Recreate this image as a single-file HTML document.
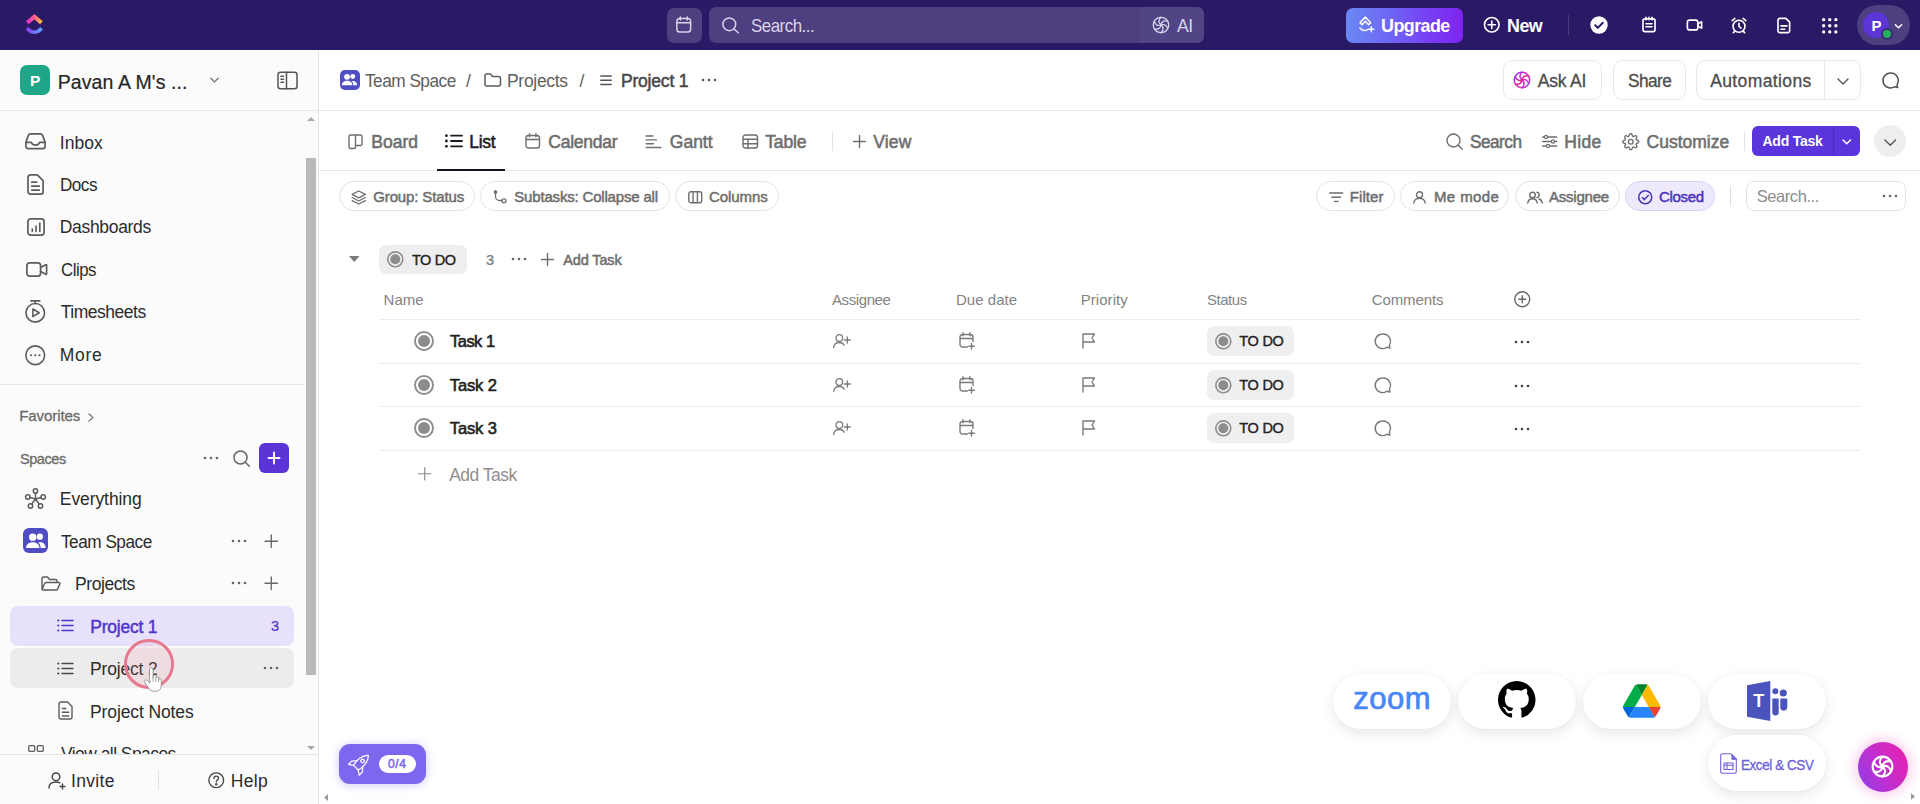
<!DOCTYPE html>
<html lang="en"><head><meta charset="utf-8"><title>Project 1 | Team Space - ClickUp</title>
<style>
html,body{margin:0;padding:0;}
body{width:1920px;height:804px;overflow:hidden;background:#fff;font-family:"Liberation Sans", sans-serif;position:relative;-webkit-font-smoothing:antialiased;}
#topbar{position:absolute;left:0;top:0;width:1920px;height:50px;background:#2a1a66;}
#sidebar{position:absolute;left:0;top:50px;width:318px;height:754px;background:#fbfbfb;border-right:1px solid #e4e4e4;overflow:hidden;}
#main{position:absolute;left:319px;top:50px;width:1601px;height:754px;background:#fff;overflow:hidden;}
#float{position:absolute;left:0;top:0;width:1920px;height:804px;pointer-events:none;}
svg{overflow:visible}
</style></head><body>
<header id="topbar">
<svg style="position:absolute;left:25px;top:13px" width="19" height="22" viewBox="0 0 19 22">
<defs><linearGradient id="lg1" x1="0" y1="0" x2="1" y2="0"><stop offset="0" stop-color="#e02fd0"/><stop offset="0.55" stop-color="#ff5f8a"/><stop offset="1" stop-color="#ffc233"/></linearGradient>
<linearGradient id="lg2" x1="0" y1="0" x2="1" y2="0"><stop offset="0" stop-color="#8f3ff5"/><stop offset="1" stop-color="#5aa0ff"/></linearGradient></defs>
<path d="M2.200 9.800L9.300 3.700l7.100 6.100" fill="none" stroke="url(#lg1)" stroke-width="4.100" stroke-linejoin="miter"/>
<path d="M2 15.300Q9.300 23.300 16.600 15.300" fill="none" stroke="url(#lg2)" stroke-width="3.600"/>
</svg>
<div style="position:absolute;left:667px;top:8px;width:35px;height:35px;background:#4d3f80;border-radius:7px;"></div>
<svg style="position:absolute;left:676.2px;top:16px;" width="15.5" height="17" viewBox="0 0 15.500 17" fill="none" stroke="#d9d4ea" stroke-width="1.5" stroke-linecap="round" stroke-linejoin="round"><rect x=".9" y="2.600" width="13.700" height="13.500" rx="2.800"/><path d="M.9 6.800h13.700M4.300 .9v3.200M11.200 .9v3.200"/></svg>
<div style="position:absolute;left:709px;top:7px;width:495px;height:36px;background:#4d3f80;border-radius:7px;"></div>
<div style="position:absolute;left:1140px;top:7px;width:64px;height:36px;background:#514586;border-radius:0 7px 7px 0;"></div>
<svg style="position:absolute;left:721.5px;top:17px;" width="17" height="16.5" viewBox="0 0 17 16.500" fill="none" stroke="#d9d4ea" stroke-width="1.5" stroke-linecap="round" stroke-linejoin="round"><circle cx="7.300" cy="7.300" r="6.400"/><path d="M12 12l4.200 3.800"/></svg>
<span style="position:absolute;left:750.91px;top:14.02px;line-height:24px;font-size:18.5px;font-weight:400;color:#d9d4ea;letter-spacing:-0.555px;white-space:nowrap;transform:scaleX(0.9145);transform-origin:0 50%;">Search...</span>
<svg style="position:absolute;left:1152px;top:16px;" width="18" height="18" viewBox="0 0 24 24" fill="none" stroke="#d9d4ea" stroke-width="1.7" stroke-linecap="round" stroke-linejoin="round"><circle cx="12" cy="12" r="10.3"/><path d="M12 12Q6.48 7.37 12.00 1.70M12 12Q13.25 4.90 20.92 6.85M12 12Q18.78 9.53 20.92 17.15M12 12Q17.52 16.63 12.00 22.30M12 12Q10.75 19.10 3.08 17.15M12 12Q5.22 14.47 3.08 6.85"/></svg>
<span style="position:absolute;left:1176.71px;top:14.02px;line-height:24px;font-size:18.5px;font-weight:400;color:#d9d4ea;letter-spacing:-0.555px;white-space:nowrap;transform:scaleX(0.9503);transform-origin:0 50%;">AI</span>
<div style="position:absolute;left:1346px;top:8px;width:117px;height:35px;background:linear-gradient(90deg,#6a88f2 0%,#6e66f5 38%,#783ef5 72%,#7e24f0 100%);border-radius:7px;"></div>
<svg style="position:absolute;left:1358px;top:15px;" width="16.5" height="17.5" viewBox="0 0 18 19" fill="none" stroke="#ffffff" stroke-width="1.6" stroke-linecap="round" stroke-linejoin="round"><path d="M2.200 8.300L8 2.200l5.800 6.100-2.200 2.200L8 6.800 4.400 10.500z"/><path d="M2 14.200c2.600 2.800 6 3.200 8.600 1.600M14.500 12.800v5.400M11.800 15.500h5.400"/></svg>
<span style="position:absolute;left:1380.70px;top:14.00px;line-height:24px;font-size:18px;font-weight:700;color:#ffffff;letter-spacing:-0.540px;white-space:nowrap;transform:scaleX(0.9933);transform-origin:0 50%;">Upgrade</span>
<svg style="position:absolute;left:1483px;top:16px;" width="17.5" height="17.5" viewBox="0 0 24 24" fill="none" stroke="#ffffff" stroke-width="2.2" stroke-linecap="round" stroke-linejoin="round"><circle cx="12" cy="12" r="10"/><path d="M12 7v10M7 12h10"/></svg>
<span style="position:absolute;left:1507.01px;top:14.00px;line-height:24px;font-size:18px;font-weight:700;color:#ffffff;letter-spacing:-0.540px;white-space:nowrap;transform:scaleX(0.9936);transform-origin:0 50%;">New</span>
<div style="position:absolute;left:1568px;top:15px;width:1px;height:20px;background:#4a3d7d;"></div>
<svg style="position:absolute;left:1590px;top:16px" width="18" height="18" viewBox="0 0 18 18"><circle cx="9" cy="9" r="8.7" fill="#fff"/><path d="M5.2 9.3l2.6 2.6 5-5.2" fill="none" stroke="#2a1a66" stroke-width="2" stroke-linecap="round" stroke-linejoin="round"/></svg>
<svg style="position:absolute;left:1640px;top:15px;" width="18" height="19" viewBox="0 0 24 24" fill="none" stroke="#ffffff" stroke-width="2.2" stroke-linecap="round" stroke-linejoin="round"><rect x="4" y="4.5" width="16" height="17" rx="2.5"/><path d="M8 2.5v3M12 2.5v3M16 2.5v3M8 11h8M8 15h8"/></svg>
<svg style="position:absolute;left:1685px;top:16px;" width="19" height="18" viewBox="0 0 24 24" fill="none" stroke="#ffffff" stroke-width="2.2" stroke-linecap="round" stroke-linejoin="round"><rect x="2.5" y="5.5" width="14" height="13" rx="3"/><path d="M16.5 10.5l5-2.8v8.6l-5-2.8z"/></svg>
<svg style="position:absolute;left:1730px;top:15.5px;" width="18" height="19" viewBox="0 0 24 24" fill="none" stroke="#ffffff" stroke-width="2.2" stroke-linecap="round" stroke-linejoin="round"><circle cx="12" cy="13" r="8"/><path d="M12 9v4l2.5 2.5M3 5.5l3.5-3M21 5.5l-3.5-3M6.5 19.5l-2 2M17.5 19.5l2 2"/></svg>
<svg style="position:absolute;left:1775px;top:15.5px;" width="18" height="19" viewBox="0 0 24 24" fill="none" stroke="#ffffff" stroke-width="2.2" stroke-linecap="round" stroke-linejoin="round"><path d="M6.5 2.5h8l5 5V19a2.5 2.5 0 0 1-2.5 2.5h-10.5A2.5 2.5 0 0 1 4 19V5a2.5 2.5 0 0 1 2.5-2.5z"/><path d="M8 12.500h8M8 17h5"/></svg>
<svg style="position:absolute;left:1820.5px;top:16.5px;" width="17.5" height="17.5" viewBox="0 0 20 20" fill="#ffffff" stroke="none" stroke-width="0" stroke-linecap="round" stroke-linejoin="round"><circle cx="3" cy="3" r="1.9"/><circle cx="3" cy="10" r="1.9"/><circle cx="3" cy="17" r="1.9"/><circle cx="10" cy="3" r="1.9"/><circle cx="10" cy="10" r="1.9"/><circle cx="10" cy="17" r="1.9"/><circle cx="17" cy="3" r="1.9"/><circle cx="17" cy="10" r="1.9"/><circle cx="17" cy="17" r="1.9"/></svg>
<div style="position:absolute;left:1857px;top:5px;width:53px;height:40px;background:#4d3f80;border-radius:20px;"></div>
<div style="position:absolute;left:1863px;top:12px;width:26px;height:26px;background:#5b35d5;border-radius:50%;"></div>
<span style="position:absolute;left:1871.50px;top:14.00px;line-height:24px;font-size:15px;font-weight:700;color:#ffffff;letter-spacing:0.000px;white-space:nowrap;">P</span>
<div style="position:absolute;left:1880.5px;top:28px;width:8px;height:8px;background:#27ae60;border-radius:50%;border:2px solid #3a2b73;"></div>
<svg style="position:absolute;left:1894px;top:22.5px;" width="9" height="7" viewBox="0 0 10 7" fill="none" stroke="#ffffff" stroke-width="1.6" stroke-linecap="round" stroke-linejoin="round"><path d="M1.5 1.5l3.5 3.5 3.5-3.5"/></svg>
</header>
<aside id="sidebar">
<div style="position:absolute;left:20px;top:15px;width:30px;height:30px;background:#1fa588;border-radius:7px;"></div>
<span style="position:absolute;left:30.00px;top:19.00px;line-height:24px;font-size:15.5px;font-weight:700;color:#fff;letter-spacing:0.000px;white-space:nowrap;">P</span>
<span style="position:absolute;left:57.72px;top:20.02px;line-height:24px;font-size:19.5px;font-weight:400;color:#262626;letter-spacing:0.099px;white-space:nowrap;-webkit-text-stroke:0.2px #262626;">Pavan A M&#x27;s ...</span>
<svg style="position:absolute;left:209.5px;top:26.5px;" width="9" height="6.5" viewBox="0 0 9 6" fill="none" stroke="#6a6a6a" stroke-width="1.1" stroke-linecap="round" stroke-linejoin="round"><path d="M.8 1l3.700 3.700L8.200 1"/></svg>
<svg style="position:absolute;left:277px;top:21px;" width="21" height="19" viewBox="0 0 21 18.5" fill="none" stroke="#555" stroke-width="1.5" stroke-linecap="round" stroke-linejoin="round"><rect x="1" y="1" width="19" height="16.5" rx="2.5"/><path d="M9.5 1v16.5M4 5h2.5M4 8h2.5M4 11h2.5"/></svg>
<div style="position:absolute;left:0px;top:60px;width:318px;height:1px;background:#e6e6e6;"></div>
<div style="position:absolute;left:304px;top:61px;width:14px;height:643px;background:#fbfbfb;"></div>
<div style="position:absolute;left:306px;top:108px;width:10px;height:517px;background:#b9b9b9;"></div>
<svg style="position:absolute;left:307px;top:67px" width="8" height="4" viewBox="0 0 8 4"><path d="M0 4l4-4 4 4z" fill="#a8a8a8"/></svg>
<svg style="position:absolute;left:307px;top:696px" width="8" height="4" viewBox="0 0 8 4"><path d="M0 0l4 4 4-4z" fill="#a8a8a8"/></svg>
<span style="position:absolute;left:59.81px;top:81.01px;line-height:24px;font-size:17.5px;font-weight:400;color:#2b2b2b;letter-spacing:0.035px;white-space:nowrap;">Inbox</span>
<span style="position:absolute;left:59.82px;top:123.00px;line-height:24px;font-size:17.5px;font-weight:400;color:#2b2b2b;letter-spacing:-0.525px;white-space:nowrap;transform:scaleX(0.9775);transform-origin:0 50%;">Docs</span>
<span style="position:absolute;left:59.81px;top:165.00px;line-height:24px;font-size:17.5px;font-weight:400;color:#2b2b2b;letter-spacing:-0.324px;white-space:nowrap;">Dashboards</span>
<span style="position:absolute;left:60.81px;top:208.01px;line-height:24px;font-size:17.5px;font-weight:400;color:#2b2b2b;letter-spacing:-0.525px;white-space:nowrap;transform:scaleX(0.9637);transform-origin:0 50%;">Clips</span>
<span style="position:absolute;left:60.81px;top:250.01px;line-height:24px;font-size:17.5px;font-weight:400;color:#2b2b2b;letter-spacing:-0.484px;white-space:nowrap;">Timesheets</span>
<span style="position:absolute;left:59.81px;top:293.01px;line-height:24px;font-size:17.5px;font-weight:400;color:#2b2b2b;letter-spacing:0.687px;white-space:nowrap;">More</span>
<svg style="position:absolute;left:25px;top:83px;" width="21" height="16.5" viewBox="0 0 21 16.5" fill="none" stroke="#5c5c5c" stroke-width="1.7" stroke-linecap="round" stroke-linejoin="round"><path d="M.9 9.300L3.300 2.600A2.600 2.600 0 0 1 5.800 .9h9.400a2.600 2.600 0 0 1 2.500 1.700l2.400 6.700v4a2.300 2.300 0 0 1-2.300 2.300H3.200A2.300 2.300 0 0 1 .9 13.300z"/><path d="M.9 9.300h5.400c.6 1.900 2.100 2.900 4.200 2.900s3.600-1 4.200-2.900h5.400"/></svg>
<svg style="position:absolute;left:27px;top:124px;" width="17" height="21" viewBox="0 0 17 21" fill="none" stroke="#5c5c5c" stroke-width="1.7" stroke-linecap="round" stroke-linejoin="round"><path d="M3.400 .9h6.900l5.800 5.800v11a2.400 2.400 0 0 1-2.400 2.400H3.400A2.400 2.400 0 0 1 1 17.700V3.300A2.400 2.400 0 0 1 3.400 .9z"/><path d="M4.800 8.200h4.800M4.800 12.200h7.500M4.800 16.200h7.500"/></svg>
<svg style="position:absolute;left:26.5px;top:167.5px;" width="18" height="18" viewBox="0 0 18 18" fill="none" stroke="#5c5c5c" stroke-width="1.7" stroke-linecap="round" stroke-linejoin="round"><rect x=".9" y=".9" width="16.200" height="16.200" rx="2.800"/><path d="M5.300 13.300v-2.300M9 13.300V8M12.800 13.300V5"/></svg>
<svg style="position:absolute;left:25.5px;top:212px;" width="21.5" height="15" viewBox="0 0 21.5 15" fill="none" stroke="#5c5c5c" stroke-width="1.7" stroke-linecap="round" stroke-linejoin="round"><rect x=".9" y=".9" width="13.700" height="13.200" rx="2.800"/><path d="M14.600 5.500l5.200-2.700c.4-.2.800.1.800.5v8.400c0 .4-.4.700-.8.500l-5.200-2.700"/></svg>
<svg style="position:absolute;left:25px;top:249.5px;" width="20.5" height="23" viewBox="0 0 20.5 23" fill="none" stroke="#5c5c5c" stroke-width="1.6" stroke-linecap="round" stroke-linejoin="round"><circle cx="10.250" cy="12.800" r="9.300"/><path d="M5.800 .9h9M10.250 .9v2.600M7.900 9v7.600l6.300-3.800z"/></svg>
<svg style="position:absolute;left:25px;top:294.5px;" width="20.5" height="20.5" viewBox="0 0 20.5 20.5" fill="none" stroke="#5c5c5c" stroke-width="1.6" stroke-linecap="round" stroke-linejoin="round"><circle cx="10.250" cy="10.250" r="9.400"/><circle cx="6" cy="10.250" r="1.100" fill="#5c5c5c" stroke="none"/><circle cx="10.250" cy="10.250" r="1.100" fill="#5c5c5c" stroke="none"/><circle cx="14.500" cy="10.250" r="1.100" fill="#5c5c5c" stroke="none"/></svg>
<div style="position:absolute;left:0px;top:334px;width:304px;height:1px;background:#e6e6e6;"></div>
<span style="position:absolute;left:19.15px;top:354.01px;line-height:24px;font-size:15px;font-weight:400;color:#6a6a6a;letter-spacing:-0.061px;white-space:nowrap;-webkit-text-stroke:0.3px #6a6a6a;">Favorites</span>
<svg style="position:absolute;left:88px;top:363px;" width="6" height="9" viewBox="0 0 6 9" fill="none" stroke="#777" stroke-width="1.3" stroke-linecap="round" stroke-linejoin="round"><path d="M1 1l4 3.500-4 3.500"/></svg>
<span style="position:absolute;left:20.16px;top:397.01px;line-height:24px;font-size:15px;font-weight:400;color:#6a6a6a;letter-spacing:-0.450px;white-space:nowrap;-webkit-text-stroke:0.3px #6a6a6a;transform:scaleX(0.9668);transform-origin:0 50%;">Spaces</span>
<svg style="position:absolute;left:203px;top:406px" width="16" height="4" viewBox="0 0 16 4"><circle cx="2" cy="2" r="1.300" fill="#666"/><circle cx="8" cy="2" r="1.300" fill="#666"/><circle cx="14" cy="2" r="1.300" fill="#666"/></svg>
<svg style="position:absolute;left:233px;top:400px;" width="17" height="17" viewBox="0 0 17 17" fill="none" stroke="#666" stroke-width="1.5" stroke-linecap="round" stroke-linejoin="round"><circle cx="7.500" cy="7.500" r="6.500"/><path d="M12.300 12.300l4 4"/></svg>
<div style="position:absolute;left:259px;top:393px;width:30px;height:30px;background:#5a34d6;border-radius:6px;"></div>
<svg style="position:absolute;left:268px;top:402px;" width="12" height="12" viewBox="0 0 12 12" fill="none" stroke="#fff" stroke-width="1.9" stroke-linecap="round" stroke-linejoin="round"><path d="M6 0.500v11M0.500 6h11"/></svg>
<svg style="position:absolute;left:25px;top:438px;" width="21" height="21" viewBox="0 0 21 21" fill="none" stroke="#5c5c5c" stroke-width="1.5" stroke-linecap="round" stroke-linejoin="round"><circle cx="10.500" cy="3" r="2.200"/><circle cx="2.800" cy="9" r="2.200"/><circle cx="18.200" cy="9" r="2.200"/><circle cx="5.500" cy="18" r="2.200"/><circle cx="15.500" cy="18" r="2.200"/><path d="M10.500 5.200v5.800M10.500 11L5 9.600M10.500 11l5.500-1.400M10.500 11l-3.800 5M10.500 11l3.800 5"/></svg>
<span style="position:absolute;left:59.81px;top:437.01px;line-height:24px;font-size:17.5px;font-weight:400;color:#2b2b2b;letter-spacing:-0.083px;white-space:nowrap;">Everything</span>
<div style="position:absolute;left:23px;top:478px;width:25px;height:25px;background:#4f4cc4;border-radius:6px;"></div>
<svg style="position:absolute;left:24.700px;top:480.800px" width="21.600" height="19.500" viewBox="0 0 21 19" fill="#fff"><circle cx="7.500" cy="6" r="3.600"/><path d="M1 16.500c0-3.600 2.900-5.600 6.500-5.600s6.500 2 6.500 5.600z"/><circle cx="14.500" cy="5.500" r="3"/><path d="M15.200 16.500c.1-2.500-.9-4.300-2.300-5.300 3.700-.9 7.100.9 7.100 5.300z"/></svg>
<span style="position:absolute;left:60.50px;top:480.01px;line-height:24px;font-size:17.5px;font-weight:400;color:#2b2b2b;letter-spacing:-0.525px;white-space:nowrap;transform:scaleX(0.9856);transform-origin:0 50%;">Team Space</span>
<svg style="position:absolute;left:231px;top:489px" width="16" height="4" viewBox="0 0 16 4"><circle cx="2" cy="2" r="1.300" fill="#666"/><circle cx="8" cy="2" r="1.300" fill="#666"/><circle cx="14" cy="2" r="1.300" fill="#666"/></svg>
<svg style="position:absolute;left:265px;top:485px;" width="12.5" height="12.5" viewBox="0 0 12 12" fill="none" stroke="#666" stroke-width="1.3" stroke-linecap="round" stroke-linejoin="round"><path d="M6 0v12M0 6h12"/></svg>
<svg style="position:absolute;left:41px;top:526px;" width="20" height="15" viewBox="0 0 20 15" fill="none" stroke="#5c5c5c" stroke-width="1.4" stroke-linecap="round" stroke-linejoin="round"><path d="M1 13.500V2.500A1.500 1.500 0 0 1 2.500 1h4l2 2.500h6A1.500 1.500 0 0 1 16 5v1.500M1 13.500l2.600-6a1.500 1.500 0 0 1 1.400-1h13a1 1 0 0 1 .900 1.400l-2.300 5.200a1.500 1.500 0 0 1-1.400.9H1.800"/></svg>
<span style="position:absolute;left:75.00px;top:522.01px;line-height:24px;font-size:17.5px;font-weight:400;color:#2b2b2b;letter-spacing:-0.424px;white-space:nowrap;">Projects</span>
<svg style="position:absolute;left:231px;top:531px" width="16" height="4" viewBox="0 0 16 4"><circle cx="2" cy="2" r="1.300" fill="#666"/><circle cx="8" cy="2" r="1.300" fill="#666"/><circle cx="14" cy="2" r="1.300" fill="#666"/></svg>
<svg style="position:absolute;left:265px;top:527px;" width="12.5" height="12.5" viewBox="0 0 12 12" fill="none" stroke="#666" stroke-width="1.3" stroke-linecap="round" stroke-linejoin="round"><path d="M6 0v12M0 6h12"/></svg>
<div style="position:absolute;left:10px;top:556px;width:284px;height:40px;background:#e7e1fc;border-radius:8px;"></div>
<svg style="position:absolute;left:56.5px;top:569px;" width="17" height="13" viewBox="0 0 17 13" fill="none" stroke="#4f35c9" stroke-width="1.5" stroke-linecap="round" stroke-linejoin="round"><circle cx="1.300" cy="1.500" r="1.100" fill="#4f35c9" stroke="none"/><circle cx="1.300" cy="6.500" r="1.100" fill="#4f35c9" stroke="none"/><circle cx="1.300" cy="11.500" r="1.100" fill="#4f35c9" stroke="none"/><path d="M5 1.500h11M5 6.500h11M5 11.500h11"/></svg>
<span style="position:absolute;left:90.24px;top:565.01px;line-height:24px;font-size:17.5px;font-weight:400;color:#4f35c9;letter-spacing:-0.223px;white-space:nowrap;-webkit-text-stroke:0.45px #4f35c9;">Project 1</span>
<span style="position:absolute;left:271.10px;top:564.02px;line-height:24px;font-size:14.5px;font-weight:400;color:#4f35c9;letter-spacing:0.000px;white-space:nowrap;-webkit-text-stroke:0.2px #4f35c9;">3</span>
<div style="position:absolute;left:10px;top:598px;width:284px;height:40px;background:#ececec;border-radius:8px;"></div>
<svg style="position:absolute;left:56.5px;top:611.5px;" width="17" height="13" viewBox="0 0 17 13" fill="none" stroke="#4a4a4a" stroke-width="1.4" stroke-linecap="round" stroke-linejoin="round"><circle cx="1.300" cy="1.500" r="1.100" fill="#4a4a4a" stroke="none"/><circle cx="1.300" cy="6.500" r="1.100" fill="#4a4a4a" stroke="none"/><circle cx="1.300" cy="11.500" r="1.100" fill="#4a4a4a" stroke="none"/><path d="M5 1.500h11M5 6.500h11M5 11.500h11"/></svg>
<span style="position:absolute;left:90.00px;top:607.01px;line-height:24px;font-size:17.5px;font-weight:400;color:#2b2b2b;letter-spacing:-0.166px;white-space:nowrap;">Project 2</span>
<svg style="position:absolute;left:263px;top:615.500px" width="16" height="4" viewBox="0 0 16 4"><circle cx="2" cy="2" r="1.300" fill="#666"/><circle cx="8" cy="2" r="1.300" fill="#666"/><circle cx="14" cy="2" r="1.300" fill="#666"/></svg>
<svg style="position:absolute;left:58px;top:651px;" width="15" height="19" viewBox="0 0 15 19" fill="none" stroke="#5c5c5c" stroke-width="1.4" stroke-linecap="round" stroke-linejoin="round"><path d="M3 1h6.500l4.500 4.500V16a2 2 0 0 1-2 2H3a2 2 0 0 1-2-2V3a2 2 0 0 1 2-2z"/><path d="M4.300 7.500h3.500M4.300 11.300h6.400M4.300 15h6.400"/></svg>
<span style="position:absolute;left:90.00px;top:650.01px;line-height:24px;font-size:17.5px;font-weight:400;color:#2b2b2b;letter-spacing:-0.108px;white-space:nowrap;">Project Notes</span>
<svg style="position:absolute;left:27.5px;top:695px;" width="16" height="7" viewBox="0 0 16 7" fill="none" stroke="#5c5c5c" stroke-width="1.3" stroke-linecap="round" stroke-linejoin="round"><rect x=".7" y=".7" width="6" height="5.600" rx="1"/><rect x="9.300" y=".7" width="6" height="5.600" rx="1"/></svg>
<span style="position:absolute;left:60.50px;top:692.01px;line-height:24px;font-size:17.5px;font-weight:400;color:#2b2b2b;letter-spacing:-0.525px;white-space:nowrap;transform:scaleX(0.9947);transform-origin:0 50%;">View all Spaces</span>
<div style="position:absolute;left:0px;top:704px;width:318px;height:50px;background:#fbfbfb;border-top:1px solid #e4e4e4;"></div>
<svg style="position:absolute;left:48px;top:721.5px;" width="18" height="17" viewBox="0 0 18 17" fill="none" stroke="#444" stroke-width="1.4" stroke-linecap="round" stroke-linejoin="round"><circle cx="8" cy="4.800" r="3.800"/><path d="M1 16c0-4 3-6 7-6 1.500 0 2.800.3 3.900.8M14.500 12v5M12 14.500h5"/></svg>
<span style="position:absolute;left:71.00px;top:719.01px;line-height:24px;font-size:17.5px;font-weight:400;color:#2b2b2b;letter-spacing:0.321px;white-space:nowrap;">Invite</span>
<div style="position:absolute;left:158px;top:720px;width:1px;height:20px;background:#e0e0e0;"></div>
<svg style="position:absolute;left:208px;top:722px;" width="16.5" height="16.5" viewBox="0 0 17 17" fill="none" stroke="#444" stroke-width="1.4" stroke-linecap="round" stroke-linejoin="round"><circle cx="8.500" cy="8.500" r="7.600"/><path d="M6.200 6.600c0-1.400 1-2.300 2.300-2.300s2.300.9 2.300 2.100c0 1.700-2.300 1.900-2.300 3.600"/><circle cx="8.500" cy="12.600" r=".6" fill="#444"/></svg>
<span style="position:absolute;left:230.71px;top:719.01px;line-height:24px;font-size:17.5px;font-weight:400;color:#2b2b2b;letter-spacing:0.347px;white-space:nowrap;">Help</span>
</aside>
<main id="main">
<div style="position:absolute;left:0px;top:60px;width:1601px;height:1px;background:#e8e8e8;"></div>
<div style="position:absolute;left:21px;top:20px;width:20px;height:20px;background:#4f4cc4;border-radius:5px;"></div>
<svg style="position:absolute;left:22px;top:22.300px" width="17" height="15.400" viewBox="0 0 21 19" fill="#fff"><circle cx="7.500" cy="6" r="3.600"/><path d="M1 16.500c0-3.600 2.900-5.600 6.500-5.600s6.500 2 6.500 5.600z"/><circle cx="14.500" cy="5.500" r="3"/><path d="M15.200 16.500c.1-2.500-.9-4.300-2.300-5.300 3.700-.9 7.100.9 7.100 5.300z"/></svg>
<span style="position:absolute;left:46.31px;top:19.01px;line-height:24px;font-size:17.5px;font-weight:400;color:#5e5e5e;letter-spacing:-0.525px;white-space:nowrap;transform:scaleX(0.9856);transform-origin:0 50%;">Team Space</span>
<span style="position:absolute;left:147.00px;top:19.01px;line-height:24px;font-size:17.5px;font-weight:400;color:#5e5e5e;letter-spacing:0.000px;white-space:nowrap;">/</span>
<svg style="position:absolute;left:165px;top:23px;" width="17.5" height="14" viewBox="0 0 17.500 14" fill="none" stroke="#5e5e5e" stroke-width="1.5" stroke-linecap="round" stroke-linejoin="round"><path d="M1 3A2 2 0 0 1 3 1h3.500l2 2.500H14.500a2 2 0 0 1 2 2V11a2 2 0 0 1-2 2H3a2 2 0 0 1-2-2z"/></svg>
<span style="position:absolute;left:188.00px;top:19.01px;line-height:24px;font-size:17.5px;font-weight:400;color:#5e5e5e;letter-spacing:-0.309px;white-space:nowrap;">Projects</span>
<span style="position:absolute;left:260.50px;top:19.01px;line-height:24px;font-size:17.5px;font-weight:400;color:#5e5e5e;letter-spacing:0.000px;white-space:nowrap;">/</span>
<svg style="position:absolute;left:281px;top:25px;" width="12" height="10.5" viewBox="0 0 12 10.500" fill="none" stroke="#555" stroke-width="1.5" stroke-linecap="round" stroke-linejoin="round"><path d="M.8 1h10.400M.8 5.200h10.400M.8 9.400h10.400"/></svg>
<span style="position:absolute;left:301.96px;top:19.01px;line-height:24px;font-size:17.5px;font-weight:400;color:#484848;letter-spacing:-0.191px;white-space:nowrap;-webkit-text-stroke:0.5px #484848;">Project 1</span>
<svg style="position:absolute;left:382px;top:28px" width="16" height="4" viewBox="0 0 16 4"><circle cx="2" cy="2" r="1.3" fill="#555"/><circle cx="8" cy="2" r="1.3" fill="#555"/><circle cx="14" cy="2" r="1.3" fill="#555"/></svg>
<div style="position:absolute;left:1183.5px;top:10px;width:99.5px;height:40px;border:1px solid #e9e9e9;border-radius:9px;box-sizing:border-box;background:#fff;"></div>
<svg style="position:absolute;left:1194px;top:21px" width="18" height="18" viewBox="0 0 24 24" fill="none" stroke-width="2" stroke-linecap="round">
<defs><linearGradient id="aig" x1="0" y1="0" x2="1" y2="1"><stop offset="0" stop-color="#8a3ffc"/><stop offset=".5" stop-color="#e0249c"/><stop offset="1" stop-color="#b43cf0"/></linearGradient></defs>
<g stroke="url(#aig)"><circle cx="12" cy="12" r="10.3"/><path d="M12 12Q6.48 7.37 12.00 1.70M12 12Q13.25 4.90 20.92 6.85M12 12Q18.78 9.53 20.92 17.15M12 12Q17.52 16.63 12.00 22.30M12 12Q10.75 19.10 3.08 17.15M12 12Q5.22 14.47 3.08 6.85"/></g></svg>
<span style="position:absolute;left:1218.65px;top:19.01px;line-height:24px;font-size:17.5px;font-weight:400;color:#4c4c4c;letter-spacing:-0.161px;white-space:nowrap;-webkit-text-stroke:0.3px #4c4c4c;">Ask AI</span>
<div style="position:absolute;left:1293.5px;top:10px;width:73px;height:40px;border:1px solid #e9e9e9;border-radius:9px;box-sizing:border-box;background:#fff;"></div>
<span style="position:absolute;left:1308.65px;top:19.01px;line-height:24px;font-size:17.5px;font-weight:400;color:#4c4c4c;letter-spacing:-0.525px;white-space:nowrap;-webkit-text-stroke:0.3px #4c4c4c;transform:scaleX(0.9849);transform-origin:0 50%;">Share</span>
<div style="position:absolute;left:1377px;top:10px;width:164.5px;height:40px;border:1px solid #e9e9e9;border-radius:9px;box-sizing:border-box;background:#fff;"></div>
<div style="position:absolute;left:1505px;top:10px;width:1px;height:40px;background:#e9e9e9;"></div>
<span style="position:absolute;left:1391.15px;top:19.01px;line-height:24px;font-size:17.5px;font-weight:400;color:#4c4c4c;letter-spacing:0.387px;white-space:nowrap;-webkit-text-stroke:0.3px #4c4c4c;">Automations</span>
<svg style="position:absolute;left:1518px;top:28px;" width="12" height="7" viewBox="0 0 12 7" fill="none" stroke="#555" stroke-width="1.4" stroke-linecap="round" stroke-linejoin="round"><path d="M1 1l5 5 5-5"/></svg>
<svg style="position:absolute;left:1562.5px;top:22px;" width="17" height="17" viewBox="0 0 17 17" fill="none" stroke="#555" stroke-width="1.5" stroke-linecap="round" stroke-linejoin="round"><path d="M8.500 1a7.500 7.500 0 1 0 4.200 13.700l3 .8-.7-2.900A7.500 7.500 0 0 0 8.500 1z"/></svg>
<div style="position:absolute;left:0px;top:120px;width:1601px;height:1px;background:#e8e8e8;"></div>
<svg style="position:absolute;left:29px;top:84px;" width="15" height="15.5" viewBox="0 0 15 15.500" fill="none" stroke="#6e6e6e" stroke-width="1.4" stroke-linecap="round" stroke-linejoin="round"><path d="M2.500 1h10A1.500 1.500 0 0 1 14 2.500v7.500a1.500 1.500 0 0 1-1.500 1.500H7.500V1M7.500 11.500V13A1.500 1.500 0 0 1 6 14.500H2.500A1.500 1.500 0 0 1 1 13V2.500A1.500 1.500 0 0 1 2.500 1"/></svg>
<span style="position:absolute;left:52.29px;top:80.01px;line-height:24px;font-size:17.5px;font-weight:400;color:#6e6e6e;letter-spacing:-0.004px;white-space:nowrap;-webkit-text-stroke:0.55px #6e6e6e;">Board</span>
<svg style="position:absolute;left:126px;top:84px;" width="18" height="14" viewBox="0 0 18 14" fill="none" stroke="#1c1c28" stroke-width="1.8" stroke-linecap="round" stroke-linejoin="round"><circle cx="1.400" cy="1.700" r="1.400" fill="#1c1c28" stroke="none"/><circle cx="1.400" cy="7" r="1.400" fill="#1c1c28" stroke="none"/><circle cx="1.400" cy="12.300" r="1.400" fill="#1c1c28" stroke="none"/><path d="M6 1.700h11M6 7h11M6 12.300h11"/></svg>
<span style="position:absolute;left:150.29px;top:80.01px;line-height:24px;font-size:17.5px;font-weight:400;color:#1c1c28;letter-spacing:-0.307px;white-space:nowrap;-webkit-text-stroke:0.55px #1c1c28;">List</span>
<div style="position:absolute;left:118px;top:119px;width:68px;height:2px;background:#15151f;"></div>
<svg style="position:absolute;left:206px;top:83px;" width="15.5" height="16" viewBox="0 0 15.500 16" fill="none" stroke="#6e6e6e" stroke-width="1.4" stroke-linecap="round" stroke-linejoin="round"><rect x="1" y="2.500" width="13.500" height="12.500" rx="2.500"/><path d="M1 6.500h13.500M4.500 .8v3M11 .8v3"/></svg>
<span style="position:absolute;left:229.29px;top:80.01px;line-height:24px;font-size:17.5px;font-weight:400;color:#6e6e6e;letter-spacing:-0.248px;white-space:nowrap;-webkit-text-stroke:0.55px #6e6e6e;">Calendar</span>
<svg style="position:absolute;left:326px;top:85px;" width="17" height="13.5" viewBox="0 0 17 13.800" fill="none" stroke="#6e6e6e" stroke-width="1.4" stroke-linecap="round" stroke-linejoin="round"><path d="M1 1h7M1 5h10.500M1 9h7.500M1 12.800h15"/></svg>
<span style="position:absolute;left:350.79px;top:80.01px;line-height:24px;font-size:17.5px;font-weight:400;color:#6e6e6e;letter-spacing:0.003px;white-space:nowrap;-webkit-text-stroke:0.55px #6e6e6e;">Gantt</span>
<svg style="position:absolute;left:422.5px;top:84px;" width="16.5" height="15" viewBox="0 0 16.500 15" fill="none" stroke="#6e6e6e" stroke-width="1.4" stroke-linecap="round" stroke-linejoin="round"><rect x="1" y="1" width="14.500" height="13" rx="2.500"/><path d="M1 5.300h14.500M1 9.700h14.500M6 5.300V14"/></svg>
<span style="position:absolute;left:446.29px;top:80.01px;line-height:24px;font-size:17.5px;font-weight:400;color:#6e6e6e;letter-spacing:-0.163px;white-space:nowrap;-webkit-text-stroke:0.55px #6e6e6e;">Table</span>
<div style="position:absolute;left:512.5px;top:81px;width:1px;height:20px;background:#e2e2e2;"></div>
<svg style="position:absolute;left:533.5px;top:85px;" width="13" height="13" viewBox="0 0 13 13" fill="none" stroke="#6e6e6e" stroke-width="1.4" stroke-linecap="round" stroke-linejoin="round"><path d="M6.500 .5v12M.5 6.500h12"/></svg>
<span style="position:absolute;left:554.29px;top:80.01px;line-height:24px;font-size:17.5px;font-weight:400;color:#6e6e6e;letter-spacing:0.158px;white-space:nowrap;-webkit-text-stroke:0.55px #6e6e6e;">View</span>
<svg style="position:absolute;left:1126.5px;top:83px;" width="17" height="17" viewBox="0 0 17 17" fill="none" stroke="#6e6e6e" stroke-width="1.4" stroke-linecap="round" stroke-linejoin="round"><circle cx="7.500" cy="7.500" r="6.500"/><path d="M12.300 12.300l4 4"/></svg>
<span style="position:absolute;left:1150.78px;top:80.01px;line-height:24px;font-size:17.5px;font-weight:400;color:#6e6e6e;letter-spacing:-0.525px;white-space:nowrap;-webkit-text-stroke:0.55px #6e6e6e;transform:scaleX(0.9840);transform-origin:0 50%;">Search</span>
<svg style="position:absolute;left:1223px;top:84.5px;" width="15.5" height="13" viewBox="0 0 15.500 13" fill="none" stroke="#6e6e6e" stroke-width="1.3" stroke-linecap="round" stroke-linejoin="round"><path d="M.7 2h14M.7 6.500h14M.7 11h14"/><circle cx="4" cy="2" r="1.600" fill="#fff"/><circle cx="11" cy="6.500" r="1.600" fill="#fff"/><circle cx="6" cy="11" r="1.600" fill="#fff"/></svg>
<span style="position:absolute;left:1245.29px;top:80.01px;line-height:24px;font-size:17.5px;font-weight:400;color:#6e6e6e;letter-spacing:0.330px;white-space:nowrap;-webkit-text-stroke:0.55px #6e6e6e;">Hide</span>
<svg style="position:absolute;left:1303px;top:82.5px;" width="17.5" height="17.5" viewBox="0 0 24 24" fill="none" stroke="#6e6e6e" stroke-width="1.9" stroke-linecap="round" stroke-linejoin="round"><circle cx="12" cy="12" r="3.200"/><path d="M19.400 15a1.650 1.650 0 0 0 .33 1.820l.06.06a2 2 0 1 1-2.830 2.830l-.06-.06a1.650 1.650 0 0 0-1.820-.33 1.650 1.650 0 0 0-1 1.510V21a2 2 0 1 1-4 0v-.09A1.650 1.650 0 0 0 9 19.400a1.650 1.650 0 0 0-1.820.33l-.06.06a2 2 0 1 1-2.830-2.830l.06-.06a1.650 1.650 0 0 0 .33-1.820 1.650 1.650 0 0 0-1.510-1H3a2 2 0 1 1 0-4h.09A1.650 1.650 0 0 0 4.600 9a1.650 1.650 0 0 0-.33-1.820l-.06-.06a2 2 0 1 1 2.830-2.830l.06.06a1.650 1.650 0 0 0 1.820.33H9a1.650 1.650 0 0 0 1-1.510V3a2 2 0 1 1 4 0v.09a1.650 1.650 0 0 0 1 1.510 1.650 1.650 0 0 0 1.820-.33l.06-.06a2 2 0 1 1 2.830 2.830l-.06.06a1.650 1.650 0 0 0-.33 1.820V9a1.650 1.650 0 0 0 1.510 1H21a2 2 0 1 1 0 4h-.09a1.650 1.650 0 0 0-1.510 1z"/></svg>
<span style="position:absolute;left:1327.57px;top:80.01px;line-height:24px;font-size:17.5px;font-weight:400;color:#6e6e6e;letter-spacing:-0.010px;white-space:nowrap;-webkit-text-stroke:0.55px #6e6e6e;">Customize</span>
<div style="position:absolute;left:1424.5px;top:81px;width:1px;height:20px;background:#e2e2e2;"></div>
<div style="position:absolute;left:1433px;top:76px;width:108px;height:30px;background:#5a35dc;border-radius:6px;"></div>
<div style="position:absolute;left:1514px;top:76px;width:1px;height:30px;background:#4a2bc0;"></div>
<span style="position:absolute;left:1443.50px;top:79.00px;line-height:24px;font-size:14px;font-weight:700;color:#fff;letter-spacing:-0.242px;white-space:nowrap;">Add Task</span>
<svg style="position:absolute;left:1523px;top:88.5px;" width="9.5" height="6" viewBox="0 0 9.500 6" fill="none" stroke="#fff" stroke-width="1.5" stroke-linecap="round" stroke-linejoin="round"><path d="M1 1l3.750 3.700L8.500 1"/></svg>
<div style="position:absolute;left:1555px;top:74.5px;width:32px;height:32px;background:#eeeeee;border-radius:50%;"></div>
<svg style="position:absolute;left:1565px;top:88.5px;" width="12.5" height="7.5" viewBox="0 0 12.500 7.500" fill="none" stroke="#555" stroke-width="1.4" stroke-linecap="round" stroke-linejoin="round"><path d="M1 1l5.250 5.200L11.500 1"/></svg>
<div style="position:absolute;left:20px;top:131px;width:135.7px;height:29.5px;border:1px solid #e3e3e3;border-radius:15px;box-sizing:border-box;background:#fff;"></div>
<svg style="position:absolute;left:32px;top:139.5px;" width="15.5" height="15" viewBox="0 0 15.500 15.300" fill="none" stroke="#6e6e6e" stroke-width="1.3" stroke-linecap="round" stroke-linejoin="round"><path d="M7.750 1L1 4.500l6.750 3.500 6.750-3.500z"/><path d="M1 7.700l6.750 3.500 6.750-3.500M1 10.800l6.750 3.500 6.750-3.500"/></svg>
<span style="position:absolute;left:54.25px;top:135.01px;line-height:24px;font-size:15px;font-weight:400;color:#6e6e6e;letter-spacing:-0.129px;white-space:nowrap;-webkit-text-stroke:0.5px #6e6e6e;">Group: Status</span>
<div style="position:absolute;left:161.3px;top:131px;width:189.40000000000003px;height:29.5px;border:1px solid #e3e3e3;border-radius:15px;box-sizing:border-box;background:#fff;"></div>
<svg style="position:absolute;left:174px;top:139.5px;" width="14" height="14" viewBox="0 0 14 14" fill="none" stroke="#6e6e6e" stroke-width="1.3" stroke-linecap="round" stroke-linejoin="round"><path d="M2.500 1v5.500a4 4 0 0 0 4 4h2.500"/><circle cx="11" cy="10.800" r="2"/><circle cx="2.500" cy="2" r="1.200"/></svg>
<span style="position:absolute;left:195.25px;top:135.01px;line-height:24px;font-size:15px;font-weight:400;color:#6e6e6e;letter-spacing:-0.179px;white-space:nowrap;-webkit-text-stroke:0.5px #6e6e6e;">Subtasks: Collapse all</span>
<div style="position:absolute;left:356.29999999999995px;top:131px;width:103.40000000000009px;height:29.5px;border:1px solid #e3e3e3;border-radius:15px;box-sizing:border-box;background:#fff;"></div>
<svg style="position:absolute;left:368.5px;top:140.5px;" width="14.5" height="12.5" viewBox="0 0 14.500 12.500" fill="none" stroke="#6e6e6e" stroke-width="1.4" stroke-linecap="round" stroke-linejoin="round"><rect x=".8" y=".8" width="12.900" height="10.900" rx="2"/><path d="M5.100 .8v10.900M9.400 .8v10.900"/></svg>
<span style="position:absolute;left:389.96px;top:135.01px;line-height:24px;font-size:15px;font-weight:400;color:#6e6e6e;letter-spacing:-0.065px;white-space:nowrap;-webkit-text-stroke:0.5px #6e6e6e;">Columns</span>
<div style="position:absolute;left:997px;top:131px;width:78.5px;height:29.5px;border:1px solid #e3e3e3;border-radius:15px;box-sizing:border-box;background:#fff;"></div>
<svg style="position:absolute;left:1009.7px;top:141.5px;" width="14.5" height="10.5" viewBox="0 0 14.500 10.500" fill="none" stroke="#6e6e6e" stroke-width="1.4" stroke-linecap="round" stroke-linejoin="round"><path d="M.7 1h13M2.800 5.200h8.800M5.300 9.400h3.800"/></svg>
<span style="position:absolute;left:1030.75px;top:135.01px;line-height:24px;font-size:15px;font-weight:400;color:#6e6e6e;letter-spacing:0.093px;white-space:nowrap;-webkit-text-stroke:0.5px #6e6e6e;">Filter</span>
<div style="position:absolute;left:1081.3px;top:131px;width:108.70000000000005px;height:29.5px;border:1px solid #e3e3e3;border-radius:15px;box-sizing:border-box;background:#fff;"></div>
<svg style="position:absolute;left:1094.3px;top:140.5px;" width="13" height="12.5" viewBox="0 0 13 12.500" fill="none" stroke="#6e6e6e" stroke-width="1.4" stroke-linecap="round" stroke-linejoin="round"><circle cx="6.500" cy="3.800" r="3"/><path d="M.8 12c.4-3 2.700-4.600 5.700-4.600s5.300 1.600 5.700 4.600"/></svg>
<span style="position:absolute;left:1114.96px;top:135.01px;line-height:24px;font-size:15px;font-weight:400;color:#6e6e6e;letter-spacing:0.403px;white-space:nowrap;-webkit-text-stroke:0.5px #6e6e6e;">Me mode</span>
<div style="position:absolute;left:1196.3px;top:131px;width:104.40000000000009px;height:29.5px;border:1px solid #e3e3e3;border-radius:15px;box-sizing:border-box;background:#fff;"></div>
<svg style="position:absolute;left:1207.7px;top:140.5px;" width="16" height="12.5" viewBox="0 0 16 12.500" fill="none" stroke="#6e6e6e" stroke-width="1.4" stroke-linecap="round" stroke-linejoin="round"><circle cx="5.500" cy="4" r="2.800"/><path d="M.8 12c.3-2.800 2.200-4.300 4.700-4.300s4.400 1.500 4.700 4.300"/><path d="M10 1.300a2.700 2.700 0 0 1 0 5.300M12 8c1.900.5 3 1.900 3.200 4"/></svg>
<span style="position:absolute;left:1230.06px;top:135.01px;line-height:24px;font-size:15px;font-weight:400;color:#6e6e6e;letter-spacing:-0.237px;white-space:nowrap;-webkit-text-stroke:0.5px #6e6e6e;">Assignee</span>
<div style="position:absolute;left:1306px;top:131px;width:89.70000000000005px;height:29.5px;border:1px solid #d8d0f7;border-radius:15px;box-sizing:border-box;background:#eeeafc;"></div>
<svg style="position:absolute;left:1318.5px;top:139.5px;" width="14.5" height="14.5" viewBox="0 0 14.500 14.500" fill="none" stroke="#4a35c0" stroke-width="1.5" stroke-linecap="round" stroke-linejoin="round"><circle cx="7.250" cy="7.250" r="6.500"/><path d="M4.300 7.500l2.100 2.100 3.900-4.100"/></svg>
<span style="position:absolute;left:1339.96px;top:135.01px;line-height:24px;font-size:15px;font-weight:400;color:#4a35c0;letter-spacing:-0.310px;white-space:nowrap;-webkit-text-stroke:0.5px #4a35c0;">Closed</span>
<div style="position:absolute;left:1411px;top:136px;width:1px;height:20px;background:#e2e2e2;"></div>
<div style="position:absolute;left:1427px;top:131px;width:160px;height:29.5px;border:1px solid #e3e3e3;border-radius:8px;box-sizing:border-box;background:#fff;"></div>
<span style="position:absolute;left:1437.71px;top:134.00px;line-height:24px;font-size:16.5px;font-weight:400;color:#8c8c8c;letter-spacing:-0.431px;white-space:nowrap;">Search...</span>
<svg style="position:absolute;left:1563px;top:144px" width="16" height="4" viewBox="0 0 16 4"><circle cx="2" cy="2" r="1.3" fill="#666"/><circle cx="8" cy="2" r="1.3" fill="#666"/><circle cx="14" cy="2" r="1.3" fill="#666"/></svg>
<svg style="position:absolute;left:29.69999999999999px;top:206px" width="10.500" height="6" viewBox="0 0 10.500 6"><path d="M0 0h10.500L5.250 6z" fill="#7a7a7a"/></svg>
<div style="position:absolute;left:60px;top:194.5px;width:88px;height:29.5px;background:#eeeeee;border-radius:7px;"></div>
<svg style="position:absolute;left:67.70px;top:201.00px" width="16.6" height="16.6" viewBox="0 0 20 20"><circle cx="10" cy="10" r="9" fill="none" stroke="#8e8e8e" stroke-width="2"/><circle cx="10" cy="10" r="6" fill="#8c8c8e"/></svg>
<span style="position:absolute;left:92.90px;top:198.02px;line-height:24px;font-size:14.5px;font-weight:400;color:#242424;letter-spacing:-0.368px;white-space:nowrap;-webkit-text-stroke:0.4px #242424;">TO DO</span>
<span style="position:absolute;left:167.10px;top:198.02px;line-height:24px;font-size:14.5px;font-weight:400;color:#777;letter-spacing:0.000px;white-space:nowrap;-webkit-text-stroke:0.2px #777;">3</span>
<svg style="position:absolute;left:191.5px;top:207px" width="16" height="4" viewBox="0 0 16 4"><circle cx="2" cy="2" r="1.3" fill="#666"/><circle cx="8" cy="2" r="1.3" fill="#666"/><circle cx="14" cy="2" r="1.3" fill="#666"/></svg>
<svg style="position:absolute;left:222px;top:203px;" width="13" height="13" viewBox="0 0 13 13" fill="none" stroke="#6e6e6e" stroke-width="1.4" stroke-linecap="round" stroke-linejoin="round"><path d="M6.500 .5v12M.5 6.500h12"/></svg>
<span style="position:absolute;left:244.25px;top:198.02px;line-height:24px;font-size:14.5px;font-weight:400;color:#6e6e6e;letter-spacing:-0.128px;white-space:nowrap;-webkit-text-stroke:0.5px #6e6e6e;">Add Task</span>
<span style="position:absolute;left:64.50px;top:238.00px;line-height:24px;font-size:15px;font-weight:400;color:#838383;letter-spacing:0.043px;white-space:nowrap;">Name</span>
<span style="position:absolute;left:513.00px;top:238.00px;line-height:24px;font-size:15px;font-weight:400;color:#838383;letter-spacing:-0.410px;white-space:nowrap;">Assignee</span>
<span style="position:absolute;left:637.00px;top:238.00px;line-height:24px;font-size:15px;font-weight:400;color:#838383;letter-spacing:0.023px;white-space:nowrap;">Due date</span>
<span style="position:absolute;left:761.71px;top:238.00px;line-height:24px;font-size:15px;font-weight:400;color:#838383;letter-spacing:0.061px;white-space:nowrap;">Priority</span>
<span style="position:absolute;left:887.71px;top:238.00px;line-height:24px;font-size:15px;font-weight:400;color:#838383;letter-spacing:-0.450px;white-space:nowrap;transform:scaleX(0.9956);transform-origin:0 50%;">Status</span>
<span style="position:absolute;left:1052.71px;top:238.00px;line-height:24px;font-size:15px;font-weight:400;color:#838383;letter-spacing:-0.102px;white-space:nowrap;">Comments</span>
<svg style="position:absolute;left:1194.8px;top:241px;" width="16.5" height="16.5" viewBox="0 0 16.500 16.500" fill="none" stroke="#666" stroke-width="1.4" stroke-linecap="round" stroke-linejoin="round"><circle cx="8.250" cy="8.250" r="7.500"/><path d="M8.250 4.800v6.900M4.800 8.250h6.900"/></svg>
<div style="position:absolute;left:60px;top:269px;width:1481px;height:1px;background:#ececec;"></div>
<div style="position:absolute;left:60px;top:313px;width:1481px;height:1px;background:#ececec;"></div>
<div style="position:absolute;left:60px;top:356px;width:1481px;height:1px;background:#ececec;"></div>
<div style="position:absolute;left:60px;top:400px;width:1481px;height:1px;background:#ececec;"></div>
<svg style="position:absolute;left:95.00px;top:281.00px" width="20" height="20" viewBox="0 0 20 20"><circle cx="10" cy="10" r="9" fill="none" stroke="#8e8e8e" stroke-width="2"/><circle cx="10" cy="10" r="6" fill="#8c8c8e"/></svg>
<span style="position:absolute;left:130.80px;top:279.00px;line-height:24px;font-size:16.5px;font-weight:400;color:#1f1f1f;letter-spacing:-0.495px;white-space:nowrap;-webkit-text-stroke:0.6px #1f1f1f;transform:scaleX(0.9970);transform-origin:0 50%;">Task 1</span>
<svg style="position:absolute;left:513.8px;top:284px;" width="18" height="14" viewBox="0 0 18 14" fill="none" stroke="#7a7a7a" stroke-width="1.3" stroke-linecap="round" stroke-linejoin="round"><circle cx="6.300" cy="4" r="3.300"/><path d="M.7 13.500c.3-3.300 2.600-5 5.600-5 2.200 0 4 .9 4.900 2.700M14.300 3v6M11.300 6h6"/></svg>
<svg style="position:absolute;left:640px;top:282px;" width="16.5" height="17.5" viewBox="0 0 16.500 17.500" fill="none" stroke="#7a7a7a" stroke-width="1.4" stroke-linecap="round" stroke-linejoin="round"><path d="M8.500 15H3.500A2.500 2.500 0 0 1 1 12.500V5A2.500 2.500 0 0 1 3.500 2.500h8A2.500 2.500 0 0 1 14 5v4.500M1 6.500h13M4 .8v3M11 .8v3M12.500 11.500v5.500M9.800 14.200h5.500"/></svg>
<svg style="position:absolute;left:763px;top:283.3px;" width="14" height="15.5" viewBox="0 0 14 15.500" fill="none" stroke="#7a7a7a" stroke-width="1.4" stroke-linecap="round" stroke-linejoin="round"><path d="M1 15V1h11.500l-2.500 4 2.500 4H1"/></svg>
<div style="position:absolute;left:888px;top:276px;width:87px;height:30px;background:#efefef;border-radius:7px;"></div>
<svg style="position:absolute;left:895.70px;top:282.70px" width="16.6" height="16.6" viewBox="0 0 20 20"><circle cx="10" cy="10" r="9" fill="none" stroke="#8e8e8e" stroke-width="2"/><circle cx="10" cy="10" r="6" fill="#8c8c8e"/></svg>
<span style="position:absolute;left:920.21px;top:279.01px;line-height:24px;font-size:14.5px;font-weight:400;color:#242424;letter-spacing:-0.243px;white-space:nowrap;-webkit-text-stroke:0.4px #242424;">TO DO</span>
<svg style="position:absolute;left:1054.7px;top:283px;" width="17" height="16.5" viewBox="0 0 17 16.500" fill="none" stroke="#7a7a7a" stroke-width="1.4" stroke-linecap="round" stroke-linejoin="round"><path d="M8.500 1a7.300 7.300 0 1 0 4.300 13.200l3.200.8-.6-3A7.300 7.300 0 0 0 8.500 1z"/></svg>
<svg style="position:absolute;left:1195px;top:289.70px" width="16" height="4" viewBox="0 0 16 4"><circle cx="2" cy="2" r="1.3" fill="#444"/><circle cx="8" cy="2" r="1.3" fill="#444"/><circle cx="14" cy="2" r="1.3" fill="#444"/></svg>
<svg style="position:absolute;left:95.00px;top:325.00px" width="20" height="20" viewBox="0 0 20 20"><circle cx="10" cy="10" r="9" fill="none" stroke="#8e8e8e" stroke-width="2"/><circle cx="10" cy="10" r="6" fill="#8c8c8e"/></svg>
<span style="position:absolute;left:130.81px;top:323.00px;line-height:24px;font-size:16.5px;font-weight:400;color:#1f1f1f;letter-spacing:-0.122px;white-space:nowrap;-webkit-text-stroke:0.6px #1f1f1f;">Task 2</span>
<svg style="position:absolute;left:513.8px;top:328px;" width="18" height="14" viewBox="0 0 18 14" fill="none" stroke="#7a7a7a" stroke-width="1.3" stroke-linecap="round" stroke-linejoin="round"><circle cx="6.300" cy="4" r="3.300"/><path d="M.7 13.500c.3-3.300 2.600-5 5.600-5 2.200 0 4 .9 4.900 2.700M14.300 3v6M11.300 6h6"/></svg>
<svg style="position:absolute;left:640px;top:326px;" width="16.5" height="17.5" viewBox="0 0 16.500 17.500" fill="none" stroke="#7a7a7a" stroke-width="1.4" stroke-linecap="round" stroke-linejoin="round"><path d="M8.500 15H3.500A2.500 2.500 0 0 1 1 12.500V5A2.500 2.500 0 0 1 3.500 2.500h8A2.500 2.500 0 0 1 14 5v4.500M1 6.500h13M4 .8v3M11 .8v3M12.500 11.500v5.500M9.800 14.200h5.500"/></svg>
<svg style="position:absolute;left:763px;top:327.3px;" width="14" height="15.5" viewBox="0 0 14 15.500" fill="none" stroke="#7a7a7a" stroke-width="1.4" stroke-linecap="round" stroke-linejoin="round"><path d="M1 15V1h11.500l-2.500 4 2.500 4H1"/></svg>
<div style="position:absolute;left:888px;top:320px;width:87px;height:30px;background:#efefef;border-radius:7px;"></div>
<svg style="position:absolute;left:895.70px;top:326.70px" width="16.6" height="16.6" viewBox="0 0 20 20"><circle cx="10" cy="10" r="9" fill="none" stroke="#8e8e8e" stroke-width="2"/><circle cx="10" cy="10" r="6" fill="#8c8c8e"/></svg>
<span style="position:absolute;left:920.21px;top:323.01px;line-height:24px;font-size:14.5px;font-weight:400;color:#242424;letter-spacing:-0.243px;white-space:nowrap;-webkit-text-stroke:0.4px #242424;">TO DO</span>
<svg style="position:absolute;left:1054.7px;top:327px;" width="17" height="16.5" viewBox="0 0 17 16.500" fill="none" stroke="#7a7a7a" stroke-width="1.4" stroke-linecap="round" stroke-linejoin="round"><path d="M8.500 1a7.300 7.300 0 1 0 4.300 13.200l3.200.8-.6-3A7.300 7.300 0 0 0 8.500 1z"/></svg>
<svg style="position:absolute;left:1195px;top:333.70px" width="16" height="4" viewBox="0 0 16 4"><circle cx="2" cy="2" r="1.3" fill="#444"/><circle cx="8" cy="2" r="1.3" fill="#444"/><circle cx="14" cy="2" r="1.3" fill="#444"/></svg>
<svg style="position:absolute;left:95.00px;top:368.00px" width="20" height="20" viewBox="0 0 20 20"><circle cx="10" cy="10" r="9" fill="none" stroke="#8e8e8e" stroke-width="2"/><circle cx="10" cy="10" r="6" fill="#8c8c8e"/></svg>
<span style="position:absolute;left:130.81px;top:366.00px;line-height:24px;font-size:16.5px;font-weight:400;color:#1f1f1f;letter-spacing:-0.122px;white-space:nowrap;-webkit-text-stroke:0.6px #1f1f1f;">Task 3</span>
<svg style="position:absolute;left:513.8px;top:371px;" width="18" height="14" viewBox="0 0 18 14" fill="none" stroke="#7a7a7a" stroke-width="1.3" stroke-linecap="round" stroke-linejoin="round"><circle cx="6.300" cy="4" r="3.300"/><path d="M.7 13.500c.3-3.300 2.600-5 5.600-5 2.200 0 4 .9 4.900 2.700M14.300 3v6M11.300 6h6"/></svg>
<svg style="position:absolute;left:640px;top:369px;" width="16.5" height="17.5" viewBox="0 0 16.500 17.500" fill="none" stroke="#7a7a7a" stroke-width="1.4" stroke-linecap="round" stroke-linejoin="round"><path d="M8.500 15H3.500A2.500 2.500 0 0 1 1 12.500V5A2.500 2.500 0 0 1 3.500 2.500h8A2.500 2.500 0 0 1 14 5v4.500M1 6.500h13M4 .8v3M11 .8v3M12.500 11.500v5.500M9.800 14.200h5.500"/></svg>
<svg style="position:absolute;left:763px;top:370.3px;" width="14" height="15.5" viewBox="0 0 14 15.500" fill="none" stroke="#7a7a7a" stroke-width="1.4" stroke-linecap="round" stroke-linejoin="round"><path d="M1 15V1h11.500l-2.500 4 2.500 4H1"/></svg>
<div style="position:absolute;left:888px;top:363px;width:87px;height:30px;background:#efefef;border-radius:7px;"></div>
<svg style="position:absolute;left:895.70px;top:369.70px" width="16.6" height="16.6" viewBox="0 0 20 20"><circle cx="10" cy="10" r="9" fill="none" stroke="#8e8e8e" stroke-width="2"/><circle cx="10" cy="10" r="6" fill="#8c8c8e"/></svg>
<span style="position:absolute;left:920.21px;top:366.01px;line-height:24px;font-size:14.5px;font-weight:400;color:#242424;letter-spacing:-0.243px;white-space:nowrap;-webkit-text-stroke:0.4px #242424;">TO DO</span>
<svg style="position:absolute;left:1054.7px;top:370px;" width="17" height="16.5" viewBox="0 0 17 16.500" fill="none" stroke="#7a7a7a" stroke-width="1.4" stroke-linecap="round" stroke-linejoin="round"><path d="M8.500 1a7.300 7.300 0 1 0 4.300 13.200l3.200.8-.6-3A7.300 7.300 0 0 0 8.500 1z"/></svg>
<svg style="position:absolute;left:1195px;top:376.70px" width="16" height="4" viewBox="0 0 16 4"><circle cx="2" cy="2" r="1.3" fill="#444"/><circle cx="8" cy="2" r="1.3" fill="#444"/><circle cx="14" cy="2" r="1.3" fill="#444"/></svg>
<svg style="position:absolute;left:98.5px;top:417px;" width="13.5" height="13.5" viewBox="0 0 13.500 13.500" fill="none" stroke="#8a8a8a" stroke-width="1.2" stroke-linecap="round" stroke-linejoin="round"><path d="M6.750 .5v12.500M.5 6.750h12.500"/></svg>
<span style="position:absolute;left:130.21px;top:413.01px;line-height:24px;font-size:17.5px;font-weight:400;color:#8f8f8f;letter-spacing:-0.519px;white-space:nowrap;">Add Task</span>
</main>
<div id="float">
<div style="position:absolute;left:339px;top:744px;width:87px;height:40px;background:#7b68ee;border-radius:11px;box-shadow:0 1px 8px 1px rgba(123,104,238,.3);"></div>
<svg style="position:absolute;left:348.8px;top:754px;" width="21" height="20" viewBox="0 0 21 20" fill="none" stroke="#fff" stroke-width="1.25" stroke-linecap="round" stroke-linejoin="round"><g transform="translate(10.800 9.800) rotate(45)"><path d="M0 -12C4.600 -8 5 0 3.200 5.500H-3.200C-5 0 -4.600 -8 0 -12z"/><circle cx="0" cy="-4" r="1.700"/><path d="M-4.100 0L-7.600 3.800V8.500L-3.300 5.500M4.100 0L7.600 3.800V8.500L3.300 5.500"/></g></svg>
<div style="position:absolute;left:379px;top:755px;width:37px;height:18px;background:#fff;border-radius:9px;"></div>
<span style="position:absolute;left:388.06px;top:752.01px;line-height:24px;font-size:12px;font-weight:400;color:#7b68ee;letter-spacing:0.596px;white-space:nowrap;-webkit-text-stroke:0.5px #7b68ee;">0/4</span>
<svg style="position:absolute;left:323.500px;top:794px" width="4" height="7" viewBox="0 0 4 7"><path d="M4 0v7L0 3.500z" fill="#9a9a9a"/></svg>
<svg style="position:absolute;left:1911px;top:793px" width="4" height="7" viewBox="0 0 4 7"><path d="M0 0v7l4-3.500z" fill="#9a9a9a"/></svg>
<div style="position:absolute;left:1333.3px;top:674px;width:117.3px;height:54.5px;background:#fff;border-radius:28px;box-shadow:0 5px 14px rgba(0,0,0,.09),0 0 3px rgba(0,0,0,.04);"></div>
<div style="position:absolute;left:1458.3px;top:674px;width:117.3px;height:54.5px;background:#fff;border-radius:28px;box-shadow:0 5px 14px rgba(0,0,0,.09),0 0 3px rgba(0,0,0,.04);"></div>
<div style="position:absolute;left:1583.3px;top:674px;width:117.3px;height:54.5px;background:#fff;border-radius:28px;box-shadow:0 5px 14px rgba(0,0,0,.09),0 0 3px rgba(0,0,0,.04);"></div>
<div style="position:absolute;left:1708.3px;top:674px;width:117.3px;height:54.5px;background:#fff;border-radius:28px;box-shadow:0 5px 14px rgba(0,0,0,.09),0 0 3px rgba(0,0,0,.04);"></div>
<div style="position:absolute;left:1708.3px;top:735.2px;width:117.3px;height:56.3px;background:#fff;border-radius:28px;box-shadow:0 5px 14px rgba(0,0,0,.09),0 0 3px rgba(0,0,0,.04);"></div>
<span style="position:absolute;left:1353.35px;top:687.01px;line-height:24px;font-size:31px;font-weight:400;color:#4687f6;letter-spacing:0.440px;white-space:nowrap;-webkit-text-stroke:0.7px #4687f6;">zoom</span>
<svg style="position:absolute;left:1498px;top:681px" width="37.500" height="37.500" viewBox="0 0 16 16"><path fill="#000" d="M8 0C3.580 0 0 3.580 0 8c0 3.540 2.290 6.530 5.470 7.590.4.070.550-.170.550-.380 0-.190-.010-.820-.010-1.490-2.010.370-2.530-.490-2.690-.940-.090-.230-.480-.940-.820-1.130-.280-.150-.680-.520-.010-.530.630-.010 1.080.580 1.230.820.720 1.210 1.870.870 2.330.660.070-.520.280-.870.510-1.070-1.780-.2-3.640-.890-3.640-3.950 0-.870.310-1.590.820-2.150-.080-.2-.360-1.020.080-2.120 0 0 .670-.210 2.200.820.640-.180 1.320-.270 2-.270s1.360.090 2 .270c1.530-1.040 2.200-.820 2.200-.820.440 1.100.160 1.920.080 2.120.510.560.820 1.270.820 2.150 0 3.070-1.870 3.750-3.650 3.950.290.250.540.730.540 1.480 0 1.070-.010 1.930-.010 2.200 0 .210.150.460.550.380A8.013 8.013 0 0 0 16 8c0-4.420-3.580-8-8-8z"/></svg>
<svg style="position:absolute;left:1622.800px;top:684px" width="37.500" height="34" viewBox="0 0 87.300 78">
<path d="m6.600 66.850 3.850 6.650c.8 1.400 1.950 2.500 3.300 3.300l13.750-23.800h-27.500c0 1.550.4 3.100 1.200 4.500z" fill="#0066da"/>
<path d="m43.650 25-13.750-23.800c-1.350.8-2.500 1.900-3.300 3.300l-25.400 44a9.060 9.060 0 0 0 -1.200 4.500h27.500z" fill="#00ac47"/>
<path d="m73.550 76.800c1.350-.8 2.500-1.900 3.300-3.300l1.600-2.750 7.650-13.250c.8-1.400 1.200-2.950 1.200-4.500h-27.502l5.852 11.500z" fill="#ea4335"/>
<path d="m43.650 25 13.750-23.800c-1.350-.8-2.900-1.200-4.500-1.200h-18.500c-1.600 0-3.150.450-4.500 1.200z" fill="#00832d"/>
<path d="m59.800 53h-32.300l-13.750 23.800c1.350.8 2.900 1.200 4.500 1.200h50.800c1.600 0 3.150-.450 4.500-1.200z" fill="#2684fc"/>
<path d="m73.400 26.500-12.700-22c-.8-1.400-1.950-2.500-3.300-3.300l-13.750 23.800 16.150 28h27.450c0-1.550-.4-3.100-1.200-4.500z" fill="#ffba00"/></svg>
<svg style="position:absolute;left:1746.700px;top:680.800px" width="41" height="40" viewBox="0 0 41 40">
<path d="M0 4.300L23.300 0v40L0 35.700z" fill="#4b53bc"/>
<text x="11.800" y="26.300" text-anchor="middle" font-family="Liberation Sans, sans-serif" font-weight="700" font-size="18" fill="#fff">T</text>
<circle cx="28.300" cy="10.300" r="3" fill="#4b53bc"/><circle cx="36.300" cy="12" r="3.600" fill="#4b53bc"/>
<path d="M25.300 17.500h6.400v13.300a3.200 3.200 0 0 1-6.400 1z" fill="#4b53bc"/>
<path d="M33.300 17.500h7v8.300a3.700 3.700 0 0 1-7 1.800z" fill="#4b53bc"/></svg>
<svg style="position:absolute;left:1720px;top:753px;" width="17" height="21" viewBox="0 0 17 21" fill="none" stroke="#6f62dc" stroke-width="1.1" stroke-linecap="round" stroke-linejoin="round"><path d="M2.500 .7h8.300l5.500 5.500V18.500a1.800 1.800 0 0 1-1.800 1.800H2.500A1.800 1.800 0 0 1 .7 18.500V2.500A1.800 1.800 0 0 1 2.500 .7z"/><path d="M12 1.900v4.300h4.300z" fill="#6f62dc"/><rect x="4" y="10" width="9" height="6.500"/><path d="M4 12.300h9M7 10v6.500"/></svg>
<span style="position:absolute;left:1740.53px;top:753.02px;line-height:24px;font-size:14.5px;font-weight:400;color:#6a5fd8;letter-spacing:-0.435px;white-space:nowrap;-webkit-text-stroke:0.3px #6a5fd8;transform:scaleX(0.9262);transform-origin:0 50%;">Excel &amp; CSV</span>
<div style="position:absolute;left:1858px;top:742px;width:50px;height:50px;background:linear-gradient(60deg,#8a3fe8 0%,#c02fd0 45%,#ee1ea8 100%);border-radius:50%;box-shadow:0 0 12px 3px rgba(230,60,190,.28);"></div>
<svg style="position:absolute;left:1871.3px;top:755px;" width="23" height="23" viewBox="0 0 24 24" fill="none" stroke="#fff" stroke-width="2.2" stroke-linecap="round" stroke-linejoin="round"><circle cx="12" cy="12" r="10.3"/><path d="M12 12Q6.48 7.37 12.00 1.70M12 12Q13.25 4.90 20.92 6.85M12 12Q18.78 9.53 20.92 17.15M12 12Q17.52 16.63 12.00 22.30M12 12Q10.75 19.10 3.08 17.15M12 12Q5.22 14.47 3.08 6.85"/></svg>
<div style="position:absolute;left:124.3px;top:639px;width:49.6px;height:49.6px;box-sizing:border-box;border:3px solid #e8788e;border-radius:50%;background:rgba(240,140,160,.16);"></div>
<svg style="position:absolute;left:144px;top:667.500px" width="17.500" height="23.500" viewBox="0 0 17.500 23.500">
<path d="M5.500 1.500a1.800 1.800 0 0 1 3.600 0v8l.3-.1V8.300a1.400 1.400 0 0 1 2.700-.2l.1 1.700.3-.1a1.400 1.400 0 0 1 2.600.4v1l.2-.1a1.300 1.300 0 0 1 2 1.200v4.300c0 2.200-.5 3.600-1.300 4.800-.8 1.300-2.200 1.900-4.300 1.900H9.300c-2 0-3.300-.9-4.300-2.400L.9 14.600c-.6-.9-.4-1.900.3-2.400.8-.5 1.800-.3 2.500.5l2.100 2.400z" fill="#fff" stroke="#8c8c8c" stroke-width=".9" stroke-linejoin="round"/>
<path d="M9 9.500v4M11.800 10v3.500M14.600 10.800v2.700" stroke="#8c8c8c" stroke-width=".8" fill="none" stroke-linecap="round"/></svg>
</div>
</body></html>
